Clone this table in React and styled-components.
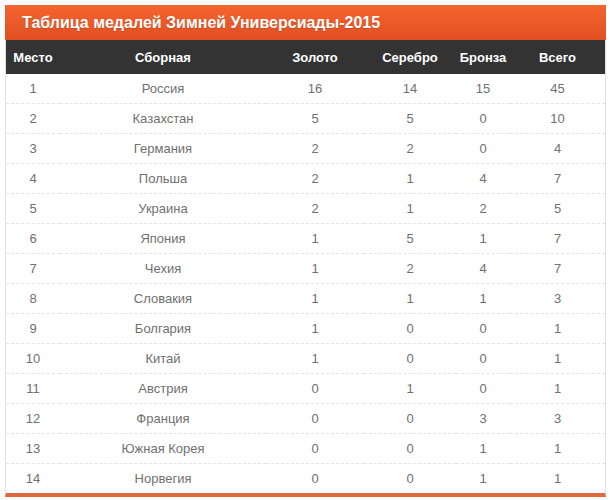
import React from "react";
import styled, { createGlobalStyle } from "styled-components";

const Global = createGlobalStyle`
  html, body { margin: 0; padding: 0; background: #fff; }
  body { font-family: "Liberation Sans", Arial, sans-serif; }
`;

const Wrap = styled.div`
  padding: 5px 6px 0 5px;
  width: 612px;
  box-sizing: border-box;
`;

const Box = styled.div`
  width: 601px;
  border-left: 1px solid #e2e2e2;
  border-right: 1px solid #e2e2e2;
  border-bottom: 4px solid #dd6a3c;
  box-sizing: border-box;
`;

const Title = styled.div`
  height: 35px;
  margin: 0 -1px;
  background: linear-gradient(to bottom, #f4642f, #e24f22);
  color: #fff;
  font-weight: bold;
  font-size: 16px;
  line-height: 35px;
  padding-left: 17px;
  text-shadow: 0 1px 1px rgba(0,0,0,0.15);
`;

const Table = styled.table`
  width: 100%;
  border-collapse: separate;
  border-spacing: 0;
  table-layout: fixed;
`;

const Head = styled.th`
  background: #333333;
  color: #fff;
  font-size: 13px;
  font-weight: bold;
  height: 34px;
  padding: 0;
  text-align: center;
  width: ${(p) => p.$w}px;
`;

const Row = styled.tr`
  &:not(:last-child) td { border-bottom: 1px dashed #e4e4e4; }
`;

const Cell = styled.td`
  color: #707070;
  font-size: 13px;
  text-align: center;
  padding: 0;
  height: 29px;
  box-sizing: content-box;
`;

const cols = [
  ["Место", 54],
  ["Сборная", 206],
  ["Золото", 98],
  ["Серебро", 92],
  ["Бронза", 54],
  ["Всего", 95],
];

const data = [
  [1, "Россия", 16, 14, 15, 45],
  [2, "Казахстан", 5, 5, 0, 10],
  [3, "Германия", 2, 2, 0, 4],
  [4, "Польша", 2, 1, 4, 7],
  [5, "Украина", 2, 1, 2, 5],
  [6, "Япония", 1, 5, 1, 7],
  [7, "Чехия", 1, 2, 4, 7],
  [8, "Словакия", 1, 1, 1, 3],
  [9, "Болгария", 1, 0, 0, 1],
  [10, "Китай", 1, 0, 0, 1],
  [11, "Австрия", 0, 1, 0, 1],
  [12, "Франция", 0, 0, 3, 3],
  [13, "Южная Корея", 0, 0, 1, 1],
  [14, "Норвегия", 0, 0, 1, 1],
];

export default function App() {
  return (
    <>
      <Global />
      <Wrap>
        <Box>
          <Title>Таблица медалей Зимней Универсиады-2015</Title>
          <Table>
            <thead>
              <tr>
                {cols.map(([n, w]) => (
                  <Head key={n} $w={w}>{n}</Head>
                ))}
              </tr>
            </thead>
            <tbody>
              {data.map((r) => (
                <Row key={r[0]}>
                  {r.map((v, i) => (
                    <Cell key={i}>{v}</Cell>
                  ))}
                </Row>
              ))}
            </tbody>
          </Table>
        </Box>
      </Wrap>
    </>
  );
}
